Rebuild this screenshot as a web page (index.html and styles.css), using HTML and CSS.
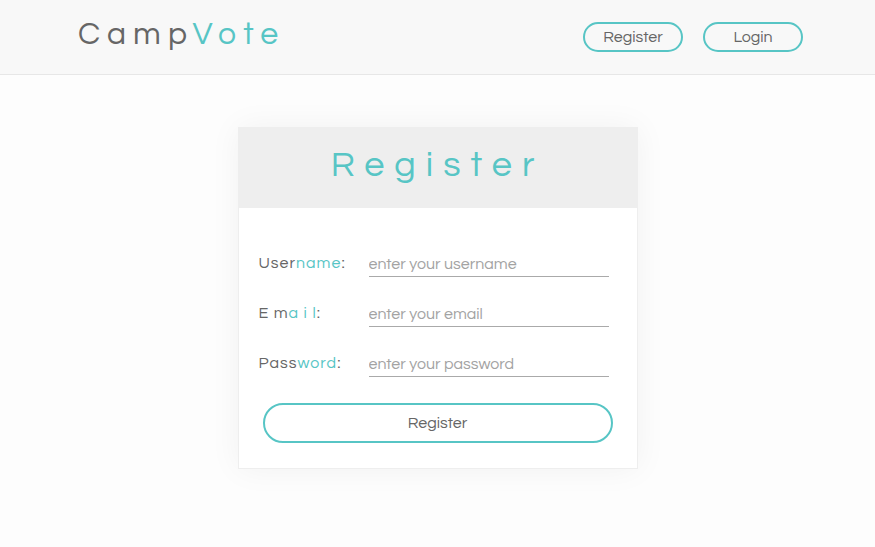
FILE: index.html
```html
<!DOCTYPE html>
<html lang="en">
<head>
<meta charset="utf-8">
<title>CampVote</title>
<link rel="stylesheet" href="styles.css">
</head>
<body>
<header class="topbar">
  <a class="logo" href="#">Camp<span class="accent">Vote</span></a>
  <nav class="nav">
    <a class="pill" href="#">Register</a>
    <a class="pill" href="#">Login</a>
  </nav>
</header>
<main class="page">
  <form class="card">
    <h1 class="card-title">Register</h1>
    <div class="card-body">
      <div class="field">
        <label class="label" for="username">User<span class="accent">name</span>:</label>
        <input class="input" id="username" type="text" placeholder="enter your username">
      </div>
      <div class="field">
        <label class="label" for="email">E m<span class="accent">a i l</span>:</label>
        <input class="input" id="email" type="email" placeholder="enter your email">
      </div>
      <div class="field">
        <label class="label" for="password">Pass<span class="accent">word</span>:</label>
        <input class="input" id="password" type="password" placeholder="enter your password">
      </div>
      <button class="submit" type="submit">Register</button>
    </div>
  </form>
</main>
</body>
</html>
```

FILE: styles.css
```css
* { box-sizing: border-box; }

body {
  margin: 0;
  background: #fdfdfd;
  color: #666;
  font-family: Questrial, Lato, sans-serif;
  font-size: 16px;
}

a { color: inherit; text-decoration: none; }

.accent { color: #57c5c5; }

.topbar {
  display: flex;
  justify-content: space-between;
  align-items: center;
  padding: 0 72px 0 78px;
  height: 75px;
  background: #f8f8f8;
  border-bottom: 1px solid #e7e7e7;
}

.logo {
  font-size: 32px;
  line-height: 40px;
  letter-spacing: 7px;
  padding-bottom: 4px;
}

.nav { display: flex; gap: 20px; }

.pill {
  width: 100px;
  border: 2px solid #57c5c5;
  border-radius: 20px;
  line-height: 26px;
  text-align: center;
}

.page { padding: 52px 20px; }

.card {
  width: 100%;
  max-width: 400px;
  margin: 0 auto;
  background: #fff;
  border: 1px solid #eee;
  box-shadow: 0 0 30px rgba(0, 0, 0, 0.05);
}

.card-title {
  margin: 0;
  padding: 13px 0 19px;
  background: #eee;
  color: #57c5c5;
  font-size: 36px;
  font-weight: 400;
  line-height: 48px;
  letter-spacing: 10px;
  text-align: center;
}

.card-body { padding: 40px 24px 25px 20px; }

.field {
  display: flex;
  height: 29px;
  margin-bottom: 21px;
}

.label {
  width: 110px;
  line-height: 30px;
  letter-spacing: 1px;
}

.input {
  flex: 1;
  min-width: 0;
  margin-right: 4px;
  padding: 3px 0 0;
  border: 0;
  border-bottom: 1px solid #aaa;
  background: transparent;
  color: inherit;
  font: inherit;
  outline: 0;
}

.input::placeholder { color: #a3a3a3; opacity: 1; }

.submit {
  display: block;
  width: 350px;
  max-width: 100%;
  height: 40px;
  margin: 26px 0 0 auto;
  border: 2px solid #57c5c5;
  border-radius: 20px;
  background: transparent;
  color: inherit;
  font: inherit;
}
```
